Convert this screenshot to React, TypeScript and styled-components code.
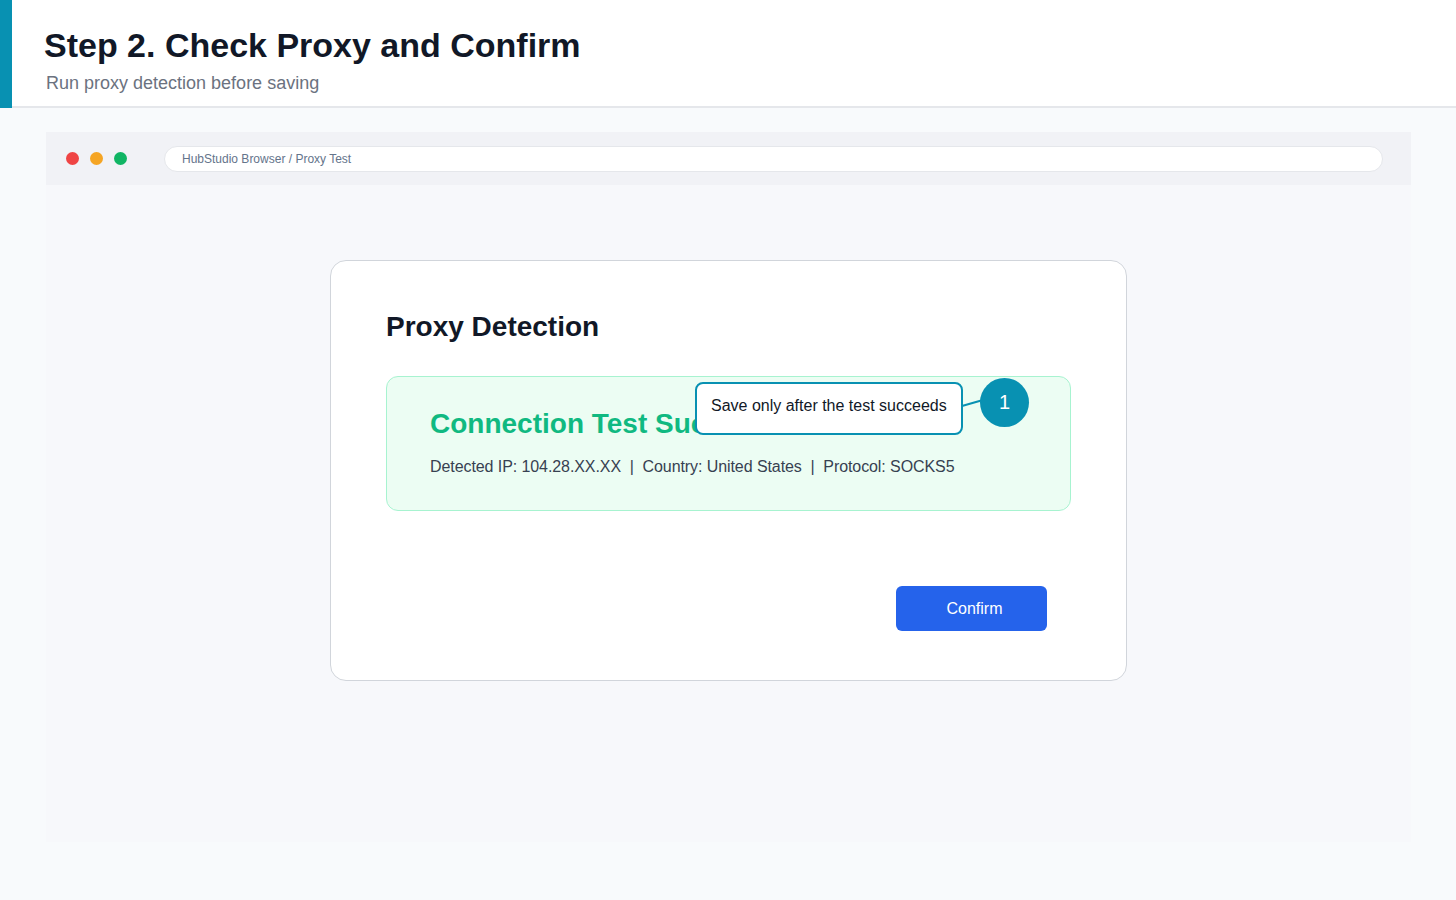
import React from 'react';
import styled, { createGlobalStyle } from 'styled-components';

const GlobalStyle = createGlobalStyle`
  html, body {
    margin: 0;
    padding: 0;
    background: #f8fafc;
    font-family: 'Liberation Sans', Arial, sans-serif;
  }
  * { box-sizing: border-box; }
`;

const Page = styled.div`
  width: 1456px;
  min-height: 900px;
  background: #f8fafc;
`;

const Header = styled.header`
  display: flex;
  height: 108px;
  background: #ffffff;
`;

const Accent = styled.div`
  width: 12px;
  background: #0891b2;
`;

const HeaderText = styled.div`
  flex: 1;
  border-bottom: 2px solid #e5e7eb;
  padding: 25px 0 0 32px;
`;

const Title = styled.h1`
  margin: 0;
  font-size: 34px;
  font-weight: 700;
  color: #111827;
  line-height: 40px;
`;

const Subtitle = styled.p`
  margin: 7px 0 0 2px;
  font-size: 18px;
  color: #6b7280;
  line-height: 22px;
`;

const Content = styled.main`
  padding: 24px 45px 0 46px;
`;

const Frame = styled.div`
  width: 1365px;
  background: #f7f8fb;
`;

const TopBar = styled.div`
  height: 53px;
  background: #f1f2f6;
  display: flex;
  align-items: center;
  padding: 0 28px 0 20px;
`;

const Dots = styled.div`
  display: flex;
  gap: 11px;
  margin-right: 37px;
`;

const Dot = styled.span<{ color: string }>`
  width: 13px;
  height: 13px;
  border-radius: 50%;
  background: ${(p) => p.color};
`;

const Address = styled.div`
  flex: 1;
  height: 26px;
  background: #ffffff;
  border: 1px solid #e5e7eb;
  border-radius: 13px;
  display: flex;
  align-items: center;
  padding-left: 17px;
  font-size: 12px;
  color: #64748b;
`;

const Body = styled.div`
  height: 657px;
  padding-top: 75px;
  display: flex;
  justify-content: center;
`;

const Card = styled.section`
  width: 797px;
  height: 421px;
  background: #ffffff;
  border: 1px solid #d1d5db;
  border-radius: 16px;
  padding: 50px 55px 0 55px;
`;

const CardTitle = styled.h2`
  margin: 0;
  font-size: 28px;
  font-weight: 700;
  color: #111827;
  line-height: 32px;
`;

const ResultBox = styled.div`
  position: relative;
  margin-top: 33px;
  height: 135px;
  background: #ecfdf3;
  border: 1px solid #a7f3d0;
  border-radius: 12px;
  padding: 31px 43px 0 43px;
`;

// the callout sits over the end of this title, as in the mockup
const ResultTitle = styled.h3`
  margin: 0;
  font-size: 28px;
  font-weight: 700;
  color: #10b981;
  line-height: 32px;
  white-space: nowrap;
`;

const ResultText = styled.p`
  margin: 17px 0 0;
  font-size: 16px;
  letter-spacing: -0.08px;
  color: #374151;
  line-height: 20px;
  white-space: pre;
`;

const Callout = styled.div`
  position: absolute;
  left: 308px;
  top: 5px;
  width: 268px;
  height: 53px;
  background: #ffffff;
  border: 2px solid #0891b2;
  border-radius: 8px;
  display: flex;
  align-items: center;
  padding-left: 14px;
  padding-bottom: 5px;
  font-size: 16px;
  color: #111827;
`;

const Connector = styled.span`
  position: absolute;
  left: 575px;
  top: 28px;
  width: 20px;
  height: 2px;
  background: #0891b2;
  transform: rotate(-16deg);
  transform-origin: left center;
`;

const Badge = styled.div`
  position: absolute;
  left: 593px;
  top: 1px;
  width: 49px;
  height: 49px;
  border-radius: 50%;
  background: #0891b2;
  color: #ffffff;
  font-size: 20px;
  display: flex;
  align-items: center;
  justify-content: center;
`;

const Actions = styled.div`
  display: flex;
  justify-content: flex-end;
  margin-top: 75px;
  padding-right: 24px;
`;

const ConfirmButton = styled.button`
  width: 151px;
  height: 45px;
  border: none;
  border-radius: 6px;
  background: #2563eb;
  color: #ffffff;
  font-family: 'Liberation Sans', Arial, sans-serif;
  font-size: 16px;
  padding-left: 12px;
  cursor: pointer;
`;

export default function App() {
  return (
    <Page>
      <GlobalStyle />
      <Header>
        <Accent />
        <HeaderText>
          <Title>Step 2. Check Proxy and Confirm</Title>
          <Subtitle>Run proxy detection before saving</Subtitle>
        </HeaderText>
      </Header>
      <Content>
        <Frame>
          <TopBar>
            <Dots>
              <Dot color="#ef4444" />
              <Dot color="#f5a524" />
              <Dot color="#10b564" />
            </Dots>
            <Address>HubStudio Browser / Proxy Test</Address>
          </TopBar>
          <Body>
            <Card>
              <CardTitle>Proxy Detection</CardTitle>
              <ResultBox>
                <ResultTitle>Connection Test Successful</ResultTitle>
                <ResultText>
                  {'Detected IP: 104.28.XX.XX  |  Country: United States  |  Protocol: SOCKS5'}
                </ResultText>
                <Callout>Save only after the test succeeds</Callout>
                <Connector />
                <Badge>1</Badge>
              </ResultBox>
              <Actions>
                <ConfirmButton>Confirm</ConfirmButton>
              </Actions>
            </Card>
          </Body>
        </Frame>
      </Content>
    </Page>
  );
}
